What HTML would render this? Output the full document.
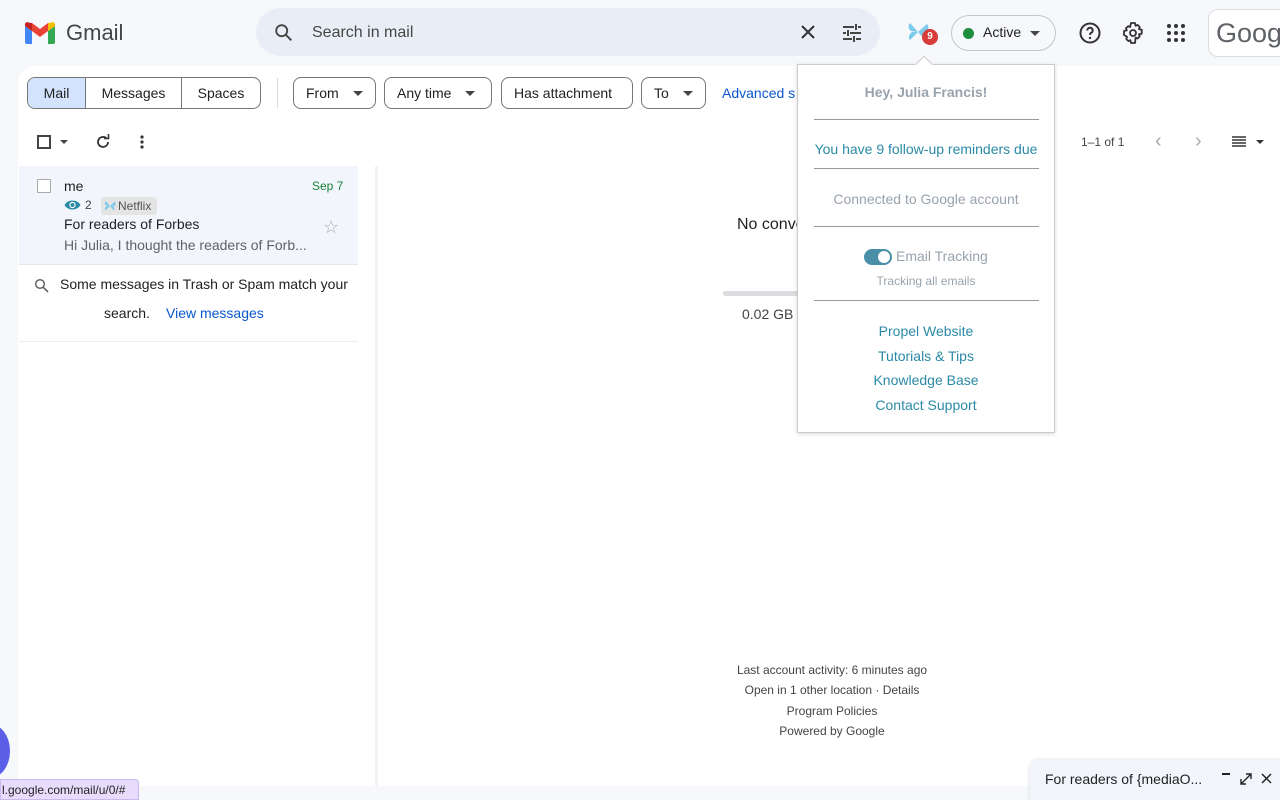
<!DOCTYPE html>
<html><head><meta charset="utf-8"><style>
*{box-sizing:border-box;margin:0;padding:0}
body{width:1280px;height:800px;overflow:hidden;background:#f6f8fc;font-family:"Liberation Sans",Arial,sans-serif;position:relative;color:#1f1f1f}
.abs{position:absolute}
.main{left:18px;top:66px;width:1262px;height:720px;background:#fff;border-radius:16px 0 0 0}
.chip{position:absolute;top:77px;height:32px;border:1px solid #747775;border-radius:8px;font-size:14px;display:flex;align-items:center;padding:0 12px;color:#1f1f1f;background:#fff}
.caret{display:inline-block;width:0;height:0;border-left:5px solid transparent;border-right:5px solid transparent;border-top:5px solid #444;margin-left:14px}
.pop a{color:#2a8aa6;text-decoration:none}
.hr{position:absolute;left:16px;width:225px;height:1px;background:#999}
</style></head><body>
<svg width="0" height="0" style="position:absolute"><defs><symbol id="pw" viewBox="0 0 22 22"><path d="M11 11L3 2C1 4 1 8 4 10zM11 11L20 3c2 2 2 6-1 8zM11 11l-8 8c-2-2-1-6 2-8zM11 11l7 8c2-2 1-6-2-8z" fill="#7cc9ee"/></symbol></defs></svg>
<svg class="abs" style="left:25px;top:22px" width="30" height="22" viewBox="0 0 30 22">
<path d="M0 4v16a2 2 0 0 0 2 2h5V9z" fill="#4285f4"/>
<path d="M23 9v13h5a2 2 0 0 0 2-2V4z" fill="#34a853"/>
<path d="M23 1v8l7-5V2.5C30 .5 27.5-.5 26 .7z" fill="#fbbc04"/>
<path d="M7 9V1l8 6 8-6v8l-8 6z" fill="#ea4335"/>
<path d="M0 2.5V4l7 5V1L4 .7C2.5-.5 0 .5 0 2.5z" fill="#c5221f"/>
</svg>
<div class="abs" style="left:66px;top:20px;font-size:22px;color:#444746">Gmail</div>
<div class="abs" style="left:256px;top:8px;width:624px;height:48px;background:#e9eef6;border-radius:24px"></div>
<svg class="abs" style="left:273px;top:22px" width="22" height="22" viewBox="0 0 24 24"><circle cx="9.5" cy="9.5" r="6" fill="none" stroke="#444" stroke-width="2"/><path d="M14 14l6 6" stroke="#444" stroke-width="2.2"/></svg>
<div class="abs" style="left:312px;top:24px;font-size:16px;color:#444746">Search in mail</div>
<svg class="abs" style="left:799px;top:23px" width="18" height="18" viewBox="0 0 18 18"><path d="M3 3l12 12M15 3L3 15" stroke="#333" stroke-width="2"/></svg>
<svg class="abs" style="left:841px;top:22px" width="22" height="22" viewBox="0 0 22 22"><path d="M2 5h11M17 5h3M2 11h3M9 11h11M2 17h9M15 17h5M15 2v6M7 8v6M13 14v6" stroke="#444" stroke-width="2"/></svg>
<svg class="abs" style="left:907px;top:21px" width="22" height="22"><use href="#pw"/></svg>
<div class="abs" style="left:922px;top:29px;width:16px;height:16px;border-radius:50%;background:#d93a3a;color:#fff;font-size:10px;font-weight:bold;text-align:center;line-height:16px">9</div>
<div class="abs" style="left:951px;top:15px;width:105px;height:36px;border:1px solid #c4c7c5;border-radius:18px"></div>
<div class="abs" style="left:963px;top:28px;width:11px;height:11px;border-radius:50%;background:#1e8e3e"></div>
<div class="abs" style="left:983px;top:24px;font-size:14px;color:#1f1f1f">Active</div>
<div class="abs" style="left:1030px;top:31px;border-left:5px solid transparent;border-right:5px solid transparent;border-top:5px solid #444"></div>
<svg class="abs" style="left:1078px;top:21px" width="24" height="24" viewBox="0 0 24 24"><circle cx="12" cy="12" r="9.5" fill="none" stroke="#333" stroke-width="2"/><path d="M9.3 9.5a2.7 2.7 0 1 1 3.8 2.4c-.8.4-1.1 1-1.1 2" fill="none" stroke="#333" stroke-width="2"/><circle cx="12" cy="17" r="1.2" fill="#333"/></svg>
<svg class="abs" style="left:1121px;top:21px" width="24" height="24" viewBox="0 0 24 24"><path d="M10 2h4l.6 2.8 2-.9 2.2 2.2-.9 2 2.8.6v4l-2.8.6.9 2-2.2 2.2-2-.9L14 22h-4l-.6-2.8-2 .9-2.2-2.2.9-2L3 14v-4l2.8-.6-.9-2 2.2-2.2 2 .9z" fill="none" stroke="#333" stroke-width="1.8" stroke-linejoin="round"/><circle cx="12" cy="12" r="3" fill="none" stroke="#333" stroke-width="1.8"/></svg>
<svg class="abs" style="left:1166px;top:23px" width="20" height="20" viewBox="0 0 20 20" fill="#333"><circle cx="3" cy="3" r="2"/><circle cx="10" cy="3" r="2"/><circle cx="17" cy="3" r="2"/><circle cx="3" cy="10" r="2"/><circle cx="10" cy="10" r="2"/><circle cx="17" cy="10" r="2"/><circle cx="3" cy="17" r="2"/><circle cx="10" cy="17" r="2"/><circle cx="17" cy="17" r="2"/></svg>
<div class="abs" style="left:1208px;top:9px;width:90px;height:48px;border:1px solid #dadce0;border-radius:10px;background:#fff;font-size:27px;color:#5f6368;padding:8px 0 0 7px">Google</div>

<div class="abs main"></div>
<div class="abs" style="left:27px;top:77px;width:234px;height:32px;border:1px solid #747775;border-radius:8px;display:flex;font-size:14px;overflow:hidden">
<div style="width:58px;background:#d3e3fd;display:flex;align-items:center;justify-content:center;border-right:1px solid #747775">Mail</div>
<div style="width:96px;display:flex;align-items:center;justify-content:center;border-right:1px solid #747775">Messages</div>
<div style="flex:1;display:flex;align-items:center;justify-content:center">Spaces</div></div>
<div class="abs" style="left:277px;top:78px;width:1px;height:30px;background:#dadce0"></div>
<div class="chip" style="left:293px;width:83px">From<span class="caret"></span></div>
<div class="chip" style="left:384px;width:108px">Any time<span class="caret"></span></div>
<div class="chip" style="left:501px;width:132px">Has attachment</div>
<div class="chip" style="left:641px;width:65px">To<span class="caret"></span></div>
<div class="abs" style="left:722px;top:85px;font-size:14px;color:#0b57d0">Advanced s</div>
<div class="abs" style="left:37px;top:135px;width:14px;height:14px;border:2px solid #444"></div>
<div class="abs" style="left:60px;top:140px;border-left:4px solid transparent;border-right:4px solid transparent;border-top:4px solid #444"></div>
<svg class="abs" style="left:95px;top:134px" width="16" height="16" viewBox="0 0 16 16"><path d="M13 8a5 5 0 1 1-1.5-3.6" fill="none" stroke="#333" stroke-width="1.8"/><path d="M9 4.5h4.5V0" fill="none" stroke="#333" stroke-width="1.6"/></svg>
<svg class="abs" style="left:139px;top:134px" width="6" height="16" viewBox="0 0 6 16" fill="#333"><circle cx="3" cy="3" r="1.6"/><circle cx="3" cy="8" r="1.6"/><circle cx="3" cy="13" r="1.6"/></svg>
<div class="abs" style="left:1081px;top:135px;font-size:12px;color:#444">1–1 of 1</div>
<div class="abs" style="left:1155px;top:130px;font-size:20px;color:#aaa">‹</div>
<div class="abs" style="left:1195px;top:130px;font-size:20px;color:#aaa">›</div>
<svg class="abs" style="left:1232px;top:136px" width="14" height="11" viewBox="0 0 14 11"><path d="M0 1h14M0 4h14M0 7h14M0 10h14" stroke="#333" stroke-width="1.4"/></svg>
<div class="abs" style="left:1256px;top:140px;border-left:4px solid transparent;border-right:4px solid transparent;border-top:4px solid #333"></div>
<div class="abs" style="left:19px;top:166px;width:339px;height:99px;background:#f2f6fc;border-bottom:1px solid #e5e7ea"></div>
<div class="abs" style="left:37px;top:179px;width:14px;height:14px;border:1.5px solid #aaa;background:#fff"></div>
<div class="abs" style="left:64px;top:178px;font-size:14px">me</div>
<div class="abs" style="left:312px;top:179px;font-size:12px;color:#188038">Sep 7</div>
<svg class="abs" style="left:64px;top:199px" width="17" height="12" viewBox="0 0 17 12"><path d="M0.5 6C4 0 13 0 16.5 6 13 12 4 12 .5 6z" fill="#2a8aa6"/><circle cx="8.5" cy="6" r="3.2" fill="#fff"/><circle cx="8.5" cy="6" r="2" fill="#2a8aa6"/></svg>
<div class="abs" style="left:85px;top:198px;font-size:12px;color:#444">2</div>
<div class="abs" style="left:101px;top:197px;width:56px;height:18px;background:#e4e4e4;border-radius:3px;font-size:12px;color:#555;padding:2px 0 0 17px">Netflix</div>
<svg class="abs" style="left:104px;top:200px" width="12" height="12"><use href="#pw"/></svg>
<div class="abs" style="left:64px;top:216px;font-size:14px">For readers of Forbes</div>
<div class="abs" style="left:64px;top:237px;font-size:14px;color:#5f6368">Hi Julia, I thought the readers of Forb...</div>
<div class="abs" style="left:323px;top:217px;font-size:18px;color:#aaa">☆</div>
<svg class="abs" style="left:34px;top:278px" width="15" height="15" viewBox="0 0 15 15"><circle cx="6" cy="6" r="4.3" fill="none" stroke="#666" stroke-width="1.5"/><path d="M9 9l5 5" stroke="#666" stroke-width="1.6"/></svg>
<div class="abs" style="left:60px;top:276px;font-size:14px">Some messages in Trash or Spam match your</div>
<div class="abs" style="left:104px;top:305px;font-size:14px">search.</div>
<div class="abs" style="left:166px;top:305px;font-size:14px;color:#0b57d0">View messages</div>
<div class="abs" style="left:19px;top:341px;width:339px;height:1px;background:#eee"></div>
<div class="abs" style="left:375px;top:166px;width:3px;height:620px;background:#f1f3f4"></div>
<div class="abs" style="left:737px;top:216px;font-size:16px;color:#1f1f1f">No conve</div>
<div class="abs" style="left:723px;top:291px;width:80px;height:5px;background:#dadce0;border-radius:3px"></div>
<div class="abs" style="left:742px;top:306px;font-size:14px;color:#444">0.02 GB</div>
<div class="abs" style="left:640px;top:660px;width:384px;text-align:center;font-size:12px;color:#444;line-height:20.3px">Last account activity: 6 minutes ago<br>Open in 1 other location · Details<br>Program Policies<br>Powered by Google</div>
<div class="abs pop" style="left:797px;top:64px;width:258px;height:369px;background:#fff;border:1px solid #ccc;box-shadow:0 1px 4px rgba(0,0,0,.15);text-align:center">
<div style="position:absolute;left:120px;top:-7px;width:12px;height:12px;background:#fff;border-left:1px solid #ccc;border-top:1px solid #ccc;transform:rotate(45deg)"></div>
<div style="position:absolute;top:19px;width:100%;font-size:14px;font-weight:bold;color:#99a3ad">Hey, Julia Francis!</div>
<div class="hr" style="top:54px"></div>
<div style="position:absolute;top:76px;width:100%;font-size:14px;color:#2a8aa6">You have 9 follow-up reminders due</div>
<div class="hr" style="top:103px"></div>
<div style="position:absolute;top:126px;width:100%;font-size:14px;color:#99a3ad">Connected to Google account</div>
<div class="hr" style="top:161px"></div>
<div style="position:absolute;left:66px;top:184px;width:28px;height:16px;border-radius:8px;background:#4a8fa8"></div>
<div style="position:absolute;left:80px;top:186px;width:12px;height:12px;border-radius:50%;background:#fff"></div>
<div style="position:absolute;left:98px;top:183px;font-size:14px;color:#99a3ad">Email Tracking</div>
<div style="position:absolute;top:209px;width:100%;font-size:12px;color:#99a3ad">Tracking all emails</div>
<div class="hr" style="top:235px"></div>
<div style="position:absolute;top:254px;width:100%;font-size:14px;line-height:24.5px"><a>Propel Website</a><br><a>Tutorials &amp; Tips</a><br><a>Knowledge Base</a><br><a>Contact Support</a></div>
</div>
<div class="abs" style="left:-30px;top:724px;width:40px;height:54px;border-radius:50%;background:#5b5fe8"></div>
<div class="abs" style="left:0;top:779px;width:139px;height:21px;background:#e8dcfc;border:1px solid #cbb8ee;border-radius:0 4px 0 0;font-size:12px;padding:3px 0 0 1px;color:#222">l.google.com/mail/u/0/#</div>
<div class="abs" style="left:1030px;top:760px;width:250px;height:40px;background:#f2f6fc;border-radius:8px 0 0 0;box-shadow:0 0 4px rgba(0,0,0,.15)"></div>
<div class="abs" style="left:1045px;top:771px;font-size:14px">For readers of {mediaO...</div>
<div class="abs" style="left:1222px;top:773px;width:8px;height:1.5px;background:#222"></div>
<svg class="abs" style="left:1240px;top:773px" width="12" height="12" viewBox="0 0 12 12"><path d="M1 11L11 1M6 1h5v5M1 6v5h5" fill="none" stroke="#222" stroke-width="1.4"/></svg>
<svg class="abs" style="left:1261px;top:773px" width="11" height="11" viewBox="0 0 11 11"><path d="M1 1l9 9M10 1L1 10" stroke="#222" stroke-width="1.5"/></svg>
</body></html>
